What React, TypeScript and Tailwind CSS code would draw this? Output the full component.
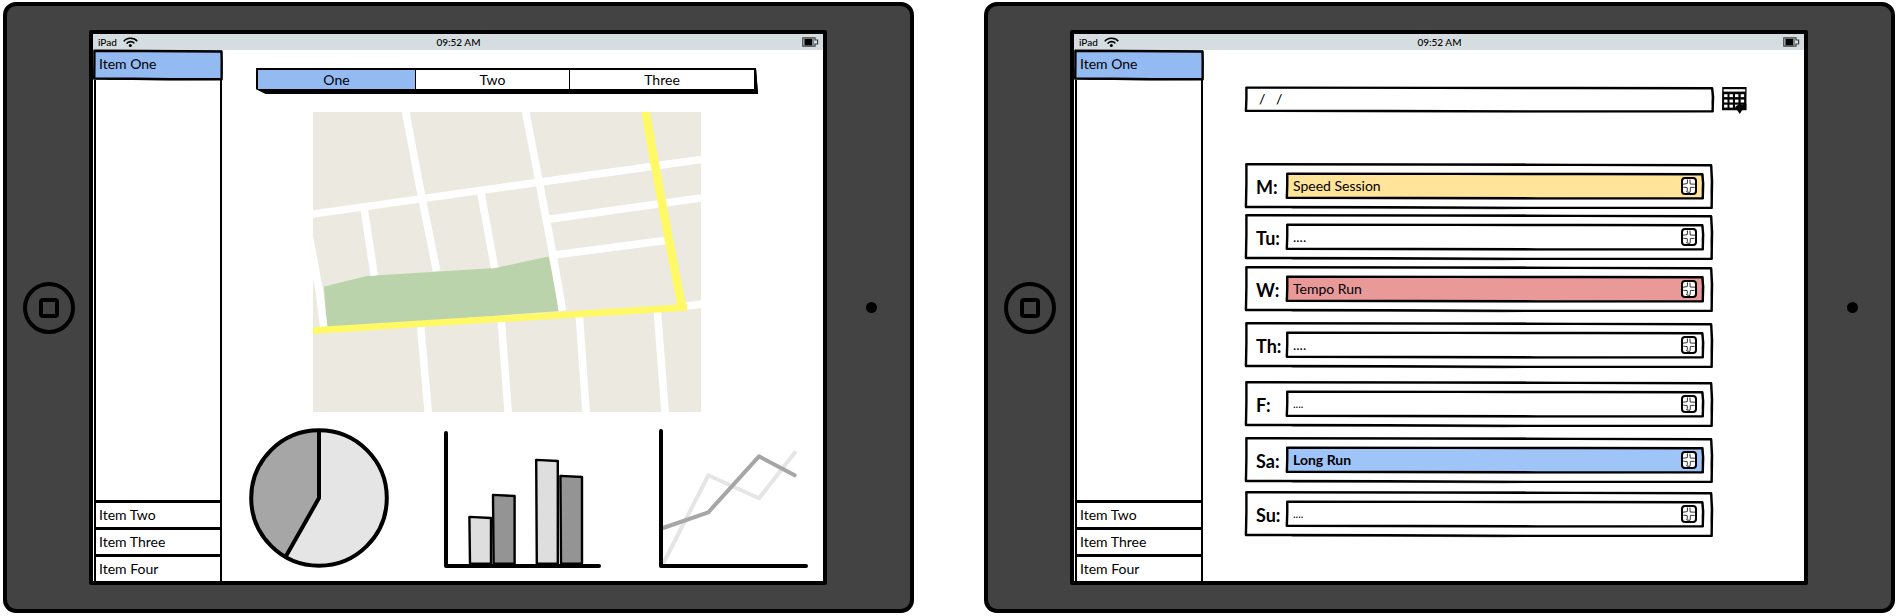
import React, { useState } from "react";

/* Hand-drawn outline laid over a box that has a transparent 2px border. */
function SketchFrame() {
  return (
    <svg
      className="pointer-events-none absolute -top-0.5 -left-0.5 h-[calc(100%+4px)] w-[calc(100%+4px)] overflow-visible"
      viewBox="0 0 100 100"
      preserveAspectRatio="none"
      fill="none"
      stroke="#000"
      strokeLinejoin="round"
      aria-hidden="true"
    >
      <path
        d="M0.3 2.5 L40 3.5 L70 4 L99.6 5 L99.8 40 L99.7 97.5 L60 97.5 L30 96 L0.2 95.5 L0.3 45 Z"
        strokeWidth="2.4"
        vectorEffect="non-scaling-stroke"
      />
      <path
        d="M0.1 3 L25 2 L60 2.5 M99.7 6 L99.6 60 L99.8 98 L55 99 L10 97.5 M0.1 94 L0.2 60"
        strokeWidth="1.2"
        strokeOpacity="0.65"
        vectorEffect="non-scaling-stroke"
      />
    </svg>
  );
}

function WifiIcon() {
  return (
    <svg width="15" height="11" viewBox="0 0 15 11" fill="none" stroke="#000" aria-hidden="true">
      <path d="M0.8 4.4 C3.5 0.4 11.2 0.2 14.2 4.2" strokeWidth="1.6" />
      <path d="M3.6 6.6 C5.2 4 9.6 3.9 11.3 6.4" strokeWidth="1.6" />
      <circle cx="7.3" cy="8.6" r="1.5" fill="#000" stroke="none" />
    </svg>
  );
}

function BatteryIcon() {
  return (
    <svg width="17" height="10" viewBox="0 0 17 10" fill="none" aria-hidden="true">
      <path d="M0.8 0.8 H13 V3 H15.6 V7 H13 V9.2 H0.8 Z" stroke="#3c4043" strokeWidth="1.2" />
      <rect x="2.4" y="1.8" width="8" height="6.6" fill="#000" />
      <path d="M11.5 2 V8.2" stroke="#3c4043" strokeWidth="0.6" />
    </svg>
  );
}

function CalendarIcon() {
  return (
    <svg width="25" height="28" viewBox="0 0 25 28" aria-hidden="true">
      <path d="M0.2 0 H24.6 L24.3 23.2 H0 Z" fill="#050505" />
      <g fill="#fff">
        <rect x="1.6" y="2.2" width="21.6" height="2.4" />
        {[7.2, 12.6, 17.7].map((y) =>
          [2.1, 7.5, 13, 18.7].map((x) => (
            <rect key={`${x}-${y}`} x={x} y={y} width="3.4" height="2.9" />
          ))
        )}
      </g>
      <path d="M13.5 19.5 L17 17.2 L20 17.5 L24.4 16.5 V23 H20.2 L17.8 27 L15 23 H13 Z" fill="#050505" />
    </svg>
  );
}

function PlusIcon() {
  return (
    <svg width="16" height="18" viewBox="0 0 16 18" fill="none" aria-hidden="true">
      <rect x="1" y="1" width="14" height="16" rx="3" fill="#fff" stroke="#000" strokeWidth="2" />
      <path
        d="M5.9 3.2 L6.6 2.6 M8.9 2.6 L9.2 7 L14 7.2 M6.5 3 L6.3 6.6 L2 7.2 M2.2 10.2 L6.2 10.6 L6.4 13.2 L5.6 15 L9 15.4 M13.6 10.4 L9.4 10.4 L9.1 15.2"
        stroke="#222"
        strokeWidth="0.9"
      />
    </svg>
  );
}

function CityMap() {
  return (
    <svg viewBox="0 0 388 300" className="block h-auto w-full" role="img" aria-label="Map">
      <rect width="388" height="300" fill="#ece9e1" />
      <polygon points="11,174.5 54,164 182,156 235.5,144.5 247,199 14,216" fill="#bbd3ab" />
      <g fill="none" stroke="#fff" strokeWidth="7.6">
        <path d="M-2 102.3 L388 47.4" />
        <path d="M92.3 -2 L108.7 85 L123.7 159" />
        <path d="M212.3 -2 L226 69 L240 143 L249.5 199" />
        <path d="M51 96 L61.3 163.5" />
        <path d="M167.7 80 L181.7 156" />
        <path d="M236 107.3 L388 86" />
        <path d="M241 143 L354 128.3" />
        <path d="M-6 112 L6.5 180 L10.8 216" />
        <path d="M107.5 212 L115.3 302" />
        <path d="M188.3 209 L195.3 302" />
        <path d="M266.3 204 L273.2 302" />
        <path d="M344.3 198 L352.2 302" />
        <path d="M370 194.5 L390 191.8" />
      </g>
      <g fill="none" stroke="#fff966">
        <path d="M-2 218.8 L127 210.5 L374 195.4" strokeWidth="6.6" />
        <path d="M332.2 -2 L342 53 L354 118 L369.5 198" strokeWidth="8.6" />
      </g>
    </svg>
  );
}

function PieChart() {
  return (
    <svg width="140" height="140" viewBox="0 0 140 140" role="img" aria-label="Pie chart">
      <circle cx="70" cy="70" r="67.8" fill="#e5e5e5" />
      <path d="M70 70 V2.2 A67.8 67.8 0 0 0 36.5 129 Z" fill="#a6a6a6" />
      <g fill="none" stroke="#000" strokeWidth="4">
        <circle cx="70" cy="70" r="67.8" />
        <path d="M70 2 V70 L36.5 129" strokeLinejoin="round" />
      </g>
    </svg>
  );
}

const bars = [
  { x: 26, y: 86.5, w: 21, fill: "#dedede" },
  { x: 49.6, y: 64.5, w: 21, fill: "#949494" },
  { x: 92.8, y: 29.5, w: 21, fill: "#dedede" },
  { x: 117, y: 45.5, w: 21, fill: "#949494" },
];

function BarChart() {
  return (
    <svg width="160" height="140" viewBox="0 -3 160 140" role="img" aria-label="Bar chart">
      {bars.map((b) => (
        <path
          key={b.x}
          d={`M${b.x - 0.6} ${b.y - 0.6} L${b.x + b.w} ${b.y + 0.5} L${b.x + b.w} 132.6 H${b.x} Z`}
          fill={b.fill}
          stroke="#000"
          strokeWidth="2.4"
          strokeLinejoin="round"
        />
      ))}
      <path d="M2 2 V135 H155" fill="none" stroke="#000" strokeWidth="4" strokeLinecap="round" strokeLinejoin="round" />
    </svg>
  );
}

function LineChart() {
  return (
    <svg width="150" height="140" viewBox="0 -1 150 140" role="img" aria-label="Line chart">
      <g fill="none" strokeWidth="4" strokeLinecap="round" strokeLinejoin="round">
        <path d="M4.5 134 L49.3 46.3 L100 69.3 L135.7 23.7" stroke="#e5e5e5" />
        <path d="M4 99 L49.3 83.3 L100 27.3 L135.7 46.3" stroke="#a6a6a6" />
        <path d="M2 2 V137 H147" stroke="#000" />
      </g>
    </svg>
  );
}

function StatusBar() {
  return (
    <header className="grid h-4 grid-cols-3 items-center bg-[#d6dde0] pr-1 pl-[5px] text-[10px] leading-4 font-medium">
      <div className="flex items-center gap-1.5">
        <span>iPad</span>
        <WifiIcon />
      </div>
      <time className="text-center">09:52 AM</time>
      <div className="flex justify-end">
        <BatteryIcon />
      </div>
    </header>
  );
}

function Sidebar() {
  return (
    <nav className="mr-px ml-px flex w-32 shrink-0 flex-col border-x-2 border-black text-[14px] leading-6">
      <a href="#one" className="relative -mx-0.5 border-2 border-transparent bg-[#94baf2] pb-0.5 pl-[3px]">
        Item One
        <SketchFrame />
      </a>
      <div className="flex-1" />
      {["Item Two", "Item Three", "Item Four"].map((t) => (
        <a key={t} href={`#${t.slice(5).toLowerCase()}`} className="border-t-[3px] border-black pl-[3px]">
          {t}
        </a>
      ))}
    </nav>
  );
}

function Tablet({ children }: { children: React.ReactNode }) {
  return (
    <section className="flex min-w-0 flex-1 items-stretch rounded-[13px] border-4 border-black bg-[#434343] py-6">
      <div className="flex w-[82px] shrink-0 items-center justify-center pl-0.5">
        <button
          aria-label="Home"
          className="flex size-[52px] items-center justify-center rounded-full border-4 border-black"
        >
          <span className="size-5 rounded-[4px] border-4 border-black" />
        </button>
      </div>
      <div className="flex min-w-0 flex-1 flex-col rounded-[2px] border-4 border-black bg-white">
        <StatusBar />
        <div className="flex flex-1">
          <Sidebar />
          {children}
        </div>
      </div>
      <div className="flex w-[83px] shrink-0 items-center justify-center pl-1.5">
        <span className="size-[11px] rounded-full bg-black" />
      </div>
    </section>
  );
}

function Dashboard() {
  const [active, setActive] = useState("One");
  return (
    <main className="flex min-w-0 flex-1 flex-col pt-[18px] pb-[13px]">
      <div className="mr-[65px] ml-[33px] bg-black [clip-path:polygon(0_0,calc(100%-2px)_0,100%_100%,10px_100%,0_calc(100%-5px))]">
        <div
          role="tablist"
          className="grid grid-cols-[158fr_154fr_184fr] border-t-2 border-r-4 border-b-[5px] border-l-2 border-black text-[14px] leading-[19px]"
        >
          {["One", "Two", "Three"].map((t) => (
            <button
              key={t}
              role="tab"
              aria-selected={active === t}
              onClick={() => setActive(t)}
              className={`border-black not-last:border-r ${active === t ? "bg-[#94baf2]" : "bg-white"}`}
            >
              {t}
            </button>
          ))}
        </div>
      </div>
      <div className="mt-[18px] mr-[122px] ml-[90px]">
        <CityMap />
      </div>
      <div className="mt-4 mr-[14px] ml-[26px] flex justify-between">
        <PieChart />
        <BarChart />
        <LineChart />
      </div>
    </main>
  );
}

type Day = { label: string; value: string; gap: string; field: string };

const days: Day[] = [
  { label: "M:", value: "Speed Session", gap: "", field: "bg-[#ffe499] text-[14px]" },
  { label: "Tu:", value: "....", gap: "mt-[5px]", field: "bg-white text-[14px]" },
  { label: "W:", value: "Tempo Run", gap: "mt-1.5", field: "bg-[#ea9999] text-[14px]" },
  { label: "Th:", value: "....", gap: "mt-2.5", field: "bg-white text-[14px]" },
  { label: "F:", value: "....", gap: "mt-[13px]", field: "bg-white text-[11px]" },
  { label: "Sa:", value: "Long Run", gap: "mt-2.5", field: "bg-[#9fc5f8] text-[14px] font-bold" },
  { label: "Su:", value: "....", gap: "mt-2", field: "bg-white text-[11px]" },
];

function DayRow({ day }: { day: Day }) {
  const id = `day-${day.label.replace(":", "")}`;
  return (
    <li className={`relative flex items-center border-2 border-transparent py-2 pr-[7px] pl-[9px] ${day.gap}`}>
      <SketchFrame />
      <label htmlFor={id} className="w-[30px] shrink-0 pt-0.5 text-[18px] leading-5 font-bold">
        {day.label}
      </label>
      <div
        className={`relative flex min-w-0 flex-1 items-center border-2 border-transparent pr-[5px] pl-[5px] ${day.field}`}
      >
        <SketchFrame />
        <input id={id} defaultValue={day.value} className="h-[22px] min-w-0 flex-1 bg-transparent pb-0.5 outline-none" />
        <button aria-label={`Add to ${day.label}`}>
          <PlusIcon />
        </button>
      </div>
    </li>
  );
}

function Planner() {
  return (
    <main className="min-w-0 flex-1 pt-[37px] pr-[57px] pb-[44px] pl-[41px]">
      <div className="flex h-[25px] gap-2">
        <div className="relative flex min-w-0 flex-1 border-2 border-transparent bg-white">
          <SketchFrame />
          <input
            aria-label="Date"
            defaultValue="/   /"
            className="min-w-0 flex-1 bg-transparent pb-0.5 pl-3 text-[14px] font-medium outline-none"
          />
        </div>
        <button aria-label="Pick a date" className="h-7 shrink-0">
          <CalendarIcon />
        </button>
      </div>
      <ul className="mt-[51px] mr-[34px]">
        {days.map((d) => (
          <DayRow key={d.label} day={d} />
        ))}
      </ul>
    </main>
  );
}

export default function App() {
  return (
    <div className="flex gap-[70px] bg-white pt-0.5 pr-0.5 pb-[3px] pl-[3px] font-['Lato','Noto_Sans',sans-serif] text-black">
      <Tablet>
        <Dashboard />
      </Tablet>
      <Tablet>
        <Planner />
      </Tablet>
    </div>
  );
}
